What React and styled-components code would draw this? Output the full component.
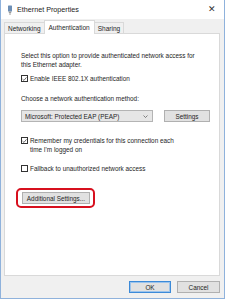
import React from 'react';
import styled, { createGlobalStyle } from 'styled-components';

const Global = createGlobalStyle`
  html, body { margin: 0; padding: 0; background: #fff; }
  body { font-family: "Liberation Sans", Arial, sans-serif; }
`;

const Window = styled.div`
  box-sizing: border-box;
  width: 225px;
  height: 299px;
  border: 1px solid #8fb2dc;
  border-top: none;
  background: #f0f0f0;
  display: flex;
  flex-direction: column;
  color: #1e1e1e;
`;

const TitleBar = styled.div`
  height: 19px;
  background: #fff;
  display: flex;
  align-items: center;
  padding: 0 8px 0 6px;
  gap: 4px;
`;

const TitleText = styled.span`
  flex: 1;
  font-size: 7.2px;
  color: #222;
`;

const Close = styled.span`
  font-size: 9px;
  color: #333;
  line-height: 1;
`;

const Body = styled.div`
  flex: 1;
  display: flex;
  flex-direction: column;
  padding: 2px 4px 0 3px;
`;

const Tabs = styled.div`
  display: flex;
  align-items: flex-end;
  height: 13px;
  margin-bottom: -1px;
  position: relative;
  z-index: 1;
`;

const Tab = styled.div`
  box-sizing: border-box;
  height: ${p => (p.active ? '14px' : '12px')};
  padding: 0 ${p => (p.active ? '4px' : '3px')};
  margin: 0 ${p => (p.active ? '-1px' : '0')};
  background: ${p => (p.active ? '#fff' : '#f0f0f0')};
  border: 1px solid #d9d9d9;
  border-bottom: ${p => (p.active ? 'none' : '1px solid #d9d9d9')};
  font-size: 6.5px;
  display: flex;
  align-items: center;
  position: relative;
  z-index: ${p => (p.active ? 2 : 0)};
`;

const Panel = styled.div`
  box-sizing: border-box;
  height: 243px;
  background: #fff;
  border: 1px solid #d9d9d9;
  padding: 17px 0 0 16px;
  display: flex;
  flex-direction: column;
  font-size: 6.4px;
  line-height: 9px;
`;

const Para = styled.div`
  margin-top: ${p => p.mt || 0}px;
  width: 180px;
`;

const CheckRow = styled.label`
  display: flex;
  align-items: flex-start;
  gap: 2px;
  margin-top: ${p => p.mt || 0}px;
`;

const Box = styled.span`
  box-sizing: border-box;
  width: 7px;
  height: 7px;
  margin-top: 1px;
  border: 1px solid #333;
  background: #fff;
  display: flex;
  align-items: center;
  justify-content: center;
  flex-shrink: 0;
`;

const MethodRow = styled.div`
  display: flex;
  gap: 11px;
  margin-top: 7px;
`;

const Select = styled.div`
  box-sizing: border-box;
  width: 132px;
  height: 12px;
  background: #e6e6e6;
  border: 1px solid #b4b4b4;
  display: flex;
  align-items: center;
  justify-content: space-between;
  padding: 0 4px 0 3px;
  font-size: 6.4px;
`;

const Button = styled.div`
  box-sizing: border-box;
  width: ${p => p.w}px;
  height: 12px;
  background: #e1e1e1;
  border: 1px solid ${p => (p.primary ? '#3c8ad8' : '#b0b0b0')};
  box-shadow: ${p => (p.primary ? 'inset 0 0 0 1px #9cc4ec' : 'none')};
  display: flex;
  align-items: center;
  justify-content: center;
  font-size: 6.4px;
`;

const Highlight = styled.div`
  align-self: flex-start;
  margin: 15px 0 0 -5px;
  border: 2px solid #d7101e;
  border-radius: 5px;
  padding: 2px 3px 2px 4px;
`;

const Footer = styled.div`
  display: flex;
  justify-content: flex-end;
  gap: 6px;
  padding-top: 5px;
`;

const Check = () => (
  <svg width="6" height="6" viewBox="0 0 6 6">
    <path d="M0.6 3.1 L2.3 4.7 L5.4 1" fill="none" stroke="#222" strokeWidth="0.8" />
  </svg>
);

const NetIcon = () => (
  <svg width="6" height="10" viewBox="0 0 6 10">
    <rect x="1" y="0.5" width="4" height="6" rx="0.6" fill="#6d8fb6" />
    <rect x="1.8" y="6.5" width="2.4" height="1.5" fill="#9a9a9a" />
    <rect x="2.5" y="8" width="1" height="2" fill="#9a9a9a" />
  </svg>
);

const Chevron = () => (
  <svg width="5" height="3" viewBox="0 0 5 3">
    <path d="M0.5 0.5 L2.5 2.5 L4.5 0.5" fill="none" stroke="#555" strokeWidth="0.7" />
  </svg>
);

export default function App() {
  return (
    <>
      <Global />
      <Window>
        <TitleBar>
          <NetIcon />
          <TitleText>Ethernet Properties</TitleText>
          <Close>✕</Close>
        </TitleBar>
        <Body>
          <Tabs>
            <Tab>Networking</Tab>
            <Tab active>Authentication</Tab>
            <Tab>Sharing</Tab>
          </Tabs>
          <Panel>
            <Para>
              Select this option to provide authenticated network access for
              this Ethernet adapter.
            </Para>
            <CheckRow mt={5}>
              <Box><Check /></Box>
              Enable IEEE 802.1X authentication
            </CheckRow>
            <Para mt={11}>Choose a network authentication method:</Para>
            <MethodRow>
              <Select>
                Microsoft: Protected EAP (PEAP)
                <Chevron />
              </Select>
              <Button w={46}>Settings</Button>
            </MethodRow>
            <CheckRow mt={14}>
              <Box><Check /></Box>
              <span>
                Remember my credentials for this connection each
                <br />
                time I'm logged on
              </span>
            </CheckRow>
            <CheckRow mt={10}>
              <Box />
              Fallback to unauthorized network access
            </CheckRow>
            <Highlight>
              <Button w={68}>Additional Settings...</Button>
            </Highlight>
          </Panel>
          <Footer>
            <Button w={42} primary>OK</Button>
            <Button w={43}>Cancel</Button>
          </Footer>
        </Body>
      </Window>
    </>
  );
}
